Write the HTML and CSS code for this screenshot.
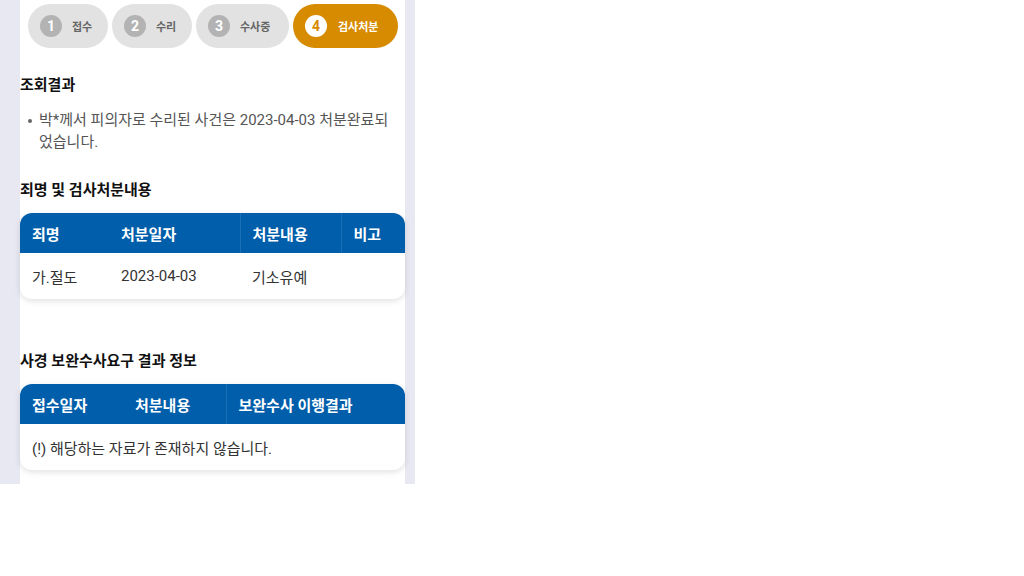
FILE: index.html
```html
<!DOCTYPE html>
<html lang="ko">
<head>
    <meta charset="UTF-8">
    <meta name="viewport" content="width=device-width, initial-scale=1.0">
    <title>사건조회 결과</title>
    <link rel="stylesheet" href="styles.css">
</head>
<body>
    <div class="frame">
        <div class="page">
            <div class="steps">
                <div class="step"><span class="num">1</span>접수</div>
                <div class="step"><span class="num">2</span>수리</div>
                <div class="step wide"><span class="num">3</span>수사중</div>
                <div class="step active"><span class="num">4</span>검사처분</div>
            </div>

            <h2 class="title">조회결과</h2>
            <ul class="result">
                <li>박*께서 피의자로 수리된 사건은 2023-04-03 처분완료되었습니다.</li>
            </ul>

            <h2 class="title">죄명 및 검사처분내용</h2>
            <div class="card">
                <table class="tbl tbl-crime">
                    <thead>
                        <tr>
                            <th>죄명</th>
                            <th>처분일자</th>
                            <th class="sep">처분내용</th>
                            <th class="sep">비고</th>
                        </tr>
                    </thead>
                    <tbody>
                        <tr>
                            <td>가.절도</td>
                            <td>2023-04-03</td>
                            <td>기소유예</td>
                            <td></td>
                        </tr>
                    </tbody>
                </table>
            </div>

            <h2 class="title title-gap">사경 보완수사요구 결과 정보</h2>
            <div class="card">
                <table class="tbl tbl-supp">
                    <thead>
                        <tr>
                            <th>접수일자</th>
                            <th>처분내용</th>
                            <th class="sep">보완수사 이행결과</th>
                        </tr>
                    </thead>
                    <tbody>
                        <tr>
                            <td colspan="3">(!) 해당하는 자료가 존재하지 않습니다.</td>
                        </tr>
                    </tbody>
                </table>
            </div>
        </div>
    </div>
</body>
</html>
```

FILE: styles.css
```css
* { margin: 0; padding: 0; box-sizing: border-box; }

body {
    font-family: Roboto, "Noto Sans CJK KR", sans-serif;
    background: #fff;
    color: #222;
}

.frame {
    width: 415px;
    height: 484px;
    background: #e8e8f2;
    padding: 0 10px 0 20px;
    overflow: hidden;
}

.page {
    background: #fff;
    height: 100%;
    padding-top: 4px;
}

.steps {
    display: flex;
    gap: 4px;
    padding-left: 8px;
}

.step {
    width: 80px;
    height: 44px;
    border-radius: 22px;
    background: #e2e2e2;
    color: #666;
    font-size: 11px;
    font-weight: 700;
    display: flex;
    align-items: center;
    padding-left: 12px;
    gap: 10px;
}

.step.wide { width: 93px; }

.step.active {
    width: 105px;
    background: #d68b00;
    color: #fff;
    gap: 11px;
}

.num {
    width: 22px;
    height: 22px;
    border-radius: 50%;
    background: #b3b3b3;
    color: #fff;
    font-size: 14px;
    font-weight: 700;
    display: flex;
    align-items: center;
    justify-content: center;
}

.active .num {
    background: #fff;
    color: #d68b00;
}

.title {
    font-size: 15px;
    font-weight: 700;
    color: #111;
    margin-top: 26px;
    line-height: 22px;
}

.title-gap { margin-top: 51px; }

.result {
    list-style: none;
    margin-top: 13px;
    padding: 0 10px 0 19px;
    font-size: 15px;
    line-height: 22px;
    color: #555;
}

.result li { position: relative; }

.result li::before {
    content: "";
    position: absolute;
    left: -11px;
    top: 10px;
    width: 4px;
    height: 4px;
    border-radius: 50%;
    background: #666;
}

.card {
    margin-top: 12px;
    border-radius: 12px;
    overflow: hidden;
    box-shadow: 0 2px 6px rgba(0,0,0,0.12);
    background: #fff;
}

.tbl {
    width: 100%;
    border-collapse: collapse;
    table-layout: fixed;
    font-size: 15px;
    text-align: left;
}

.tbl th {
    background: #005eaa;
    color: #fff;
    font-weight: 700;
    height: 40px;
    padding: 0 12px;
}

.tbl th.sep { border-left: 1px solid #1c6fb4; }

.tbl td {
    height: 46px;
    padding: 0 12px;
    color: #333;
}

.tbl-crime th:nth-child(1) { width: 89px; }
.tbl-crime th:nth-child(2) { width: 131px; }
.tbl-crime th:nth-child(3) { width: 101px; }

.tbl-supp th:nth-child(1) { width: 103px; }
.tbl-supp th:nth-child(2) { width: 103px; }
```
